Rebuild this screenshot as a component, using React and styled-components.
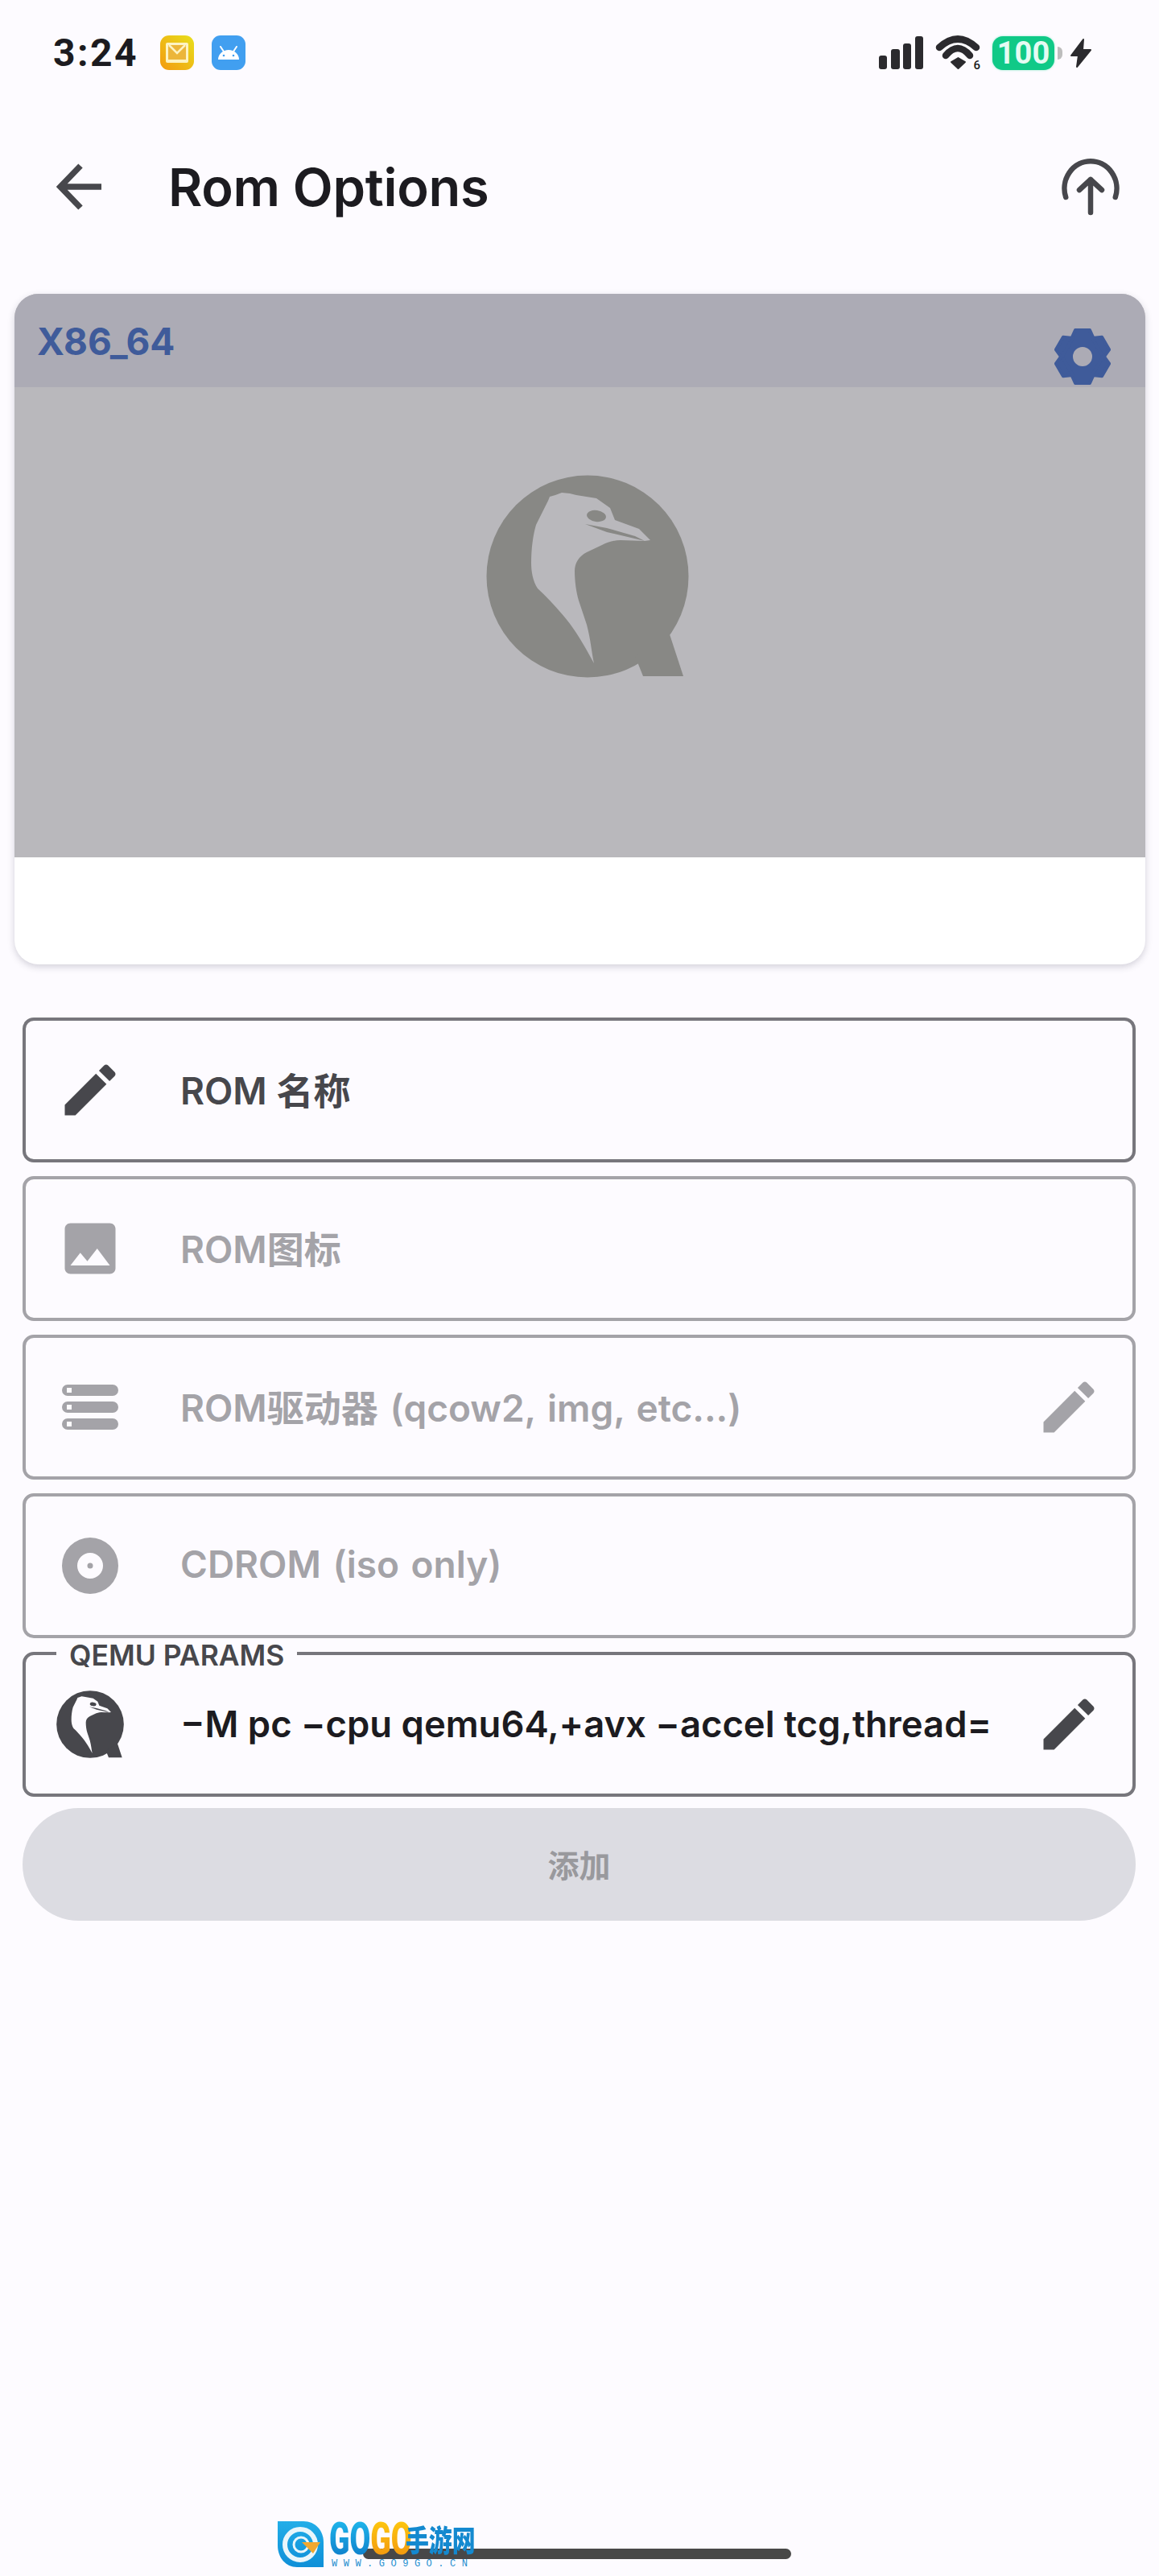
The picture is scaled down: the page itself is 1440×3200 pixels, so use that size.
import React from "react";
import styled, { createGlobalStyle } from "styled-components";

const GlobalStyle = createGlobalStyle`
  html, body {
    margin: 0;
    padding: 0;
    background: #fdfbff;
  }
  * {
    box-sizing: border-box;
  }
`;

const FONT = `Inter, "Noto Sans CJK SC", sans-serif`;

const Page = styled.div`
  position: relative;
  width: 1440px;
  height: 3200px;
  display: flex;
  flex-direction: column;
  background: #fdfbff;
  font-family: ${FONT};
  overflow: hidden;
`;

const StatusBar = styled.div`
  height: 132px;
  padding: 44px 83px 0 66px;
  display: flex;
  align-items: flex-start;
`;

const Clock = styled.span`
  font-family: Roboto, sans-serif;
  font-size: 48px;
  line-height: 44px;
  font-weight: 700;
  letter-spacing: 2.5px;
  color: #1c1b20;
  margin-right: 27px;
`;

const AppBadge = styled.div`
  width: 42px;
  height: 43px;
  border-radius: 11px;
  margin-right: 22px;
  background: ${({ $bg }) => $bg};
  display: flex;
  align-items: center;
  justify-content: center;
`;

const StatusRight = styled.div`
  margin-left: auto;
  display: flex;
  align-items: center;
  height: 43px;
`;

const WifiWrap = styled.div`
  position: relative;
  width: 58px;
  height: 44px;
  margin-left: 14px;
`;

const WifiGeneration = styled.span`
  position: absolute;
  right: 2px;
  bottom: -1px;
  font-family: Roboto, sans-serif;
  font-size: 15px;
  line-height: 15px;
  font-weight: 500;
  color: #1c1b20;
`;

const Battery = styled.div`
  position: relative;
  width: 77px;
  height: 42px;
  margin: 0 19px 0 13px;
  border-radius: 13px;
  background: #10c987;
  box-shadow: 0 0 3px #9cebcf;
  color: #e4fbf3;
  font-family: Roboto, sans-serif;
  font-size: 38px;
  line-height: 42px;
  font-weight: 700;
  text-align: center;

  &::after {
    content: "";
    position: absolute;
    right: -10px;
    top: 13px;
    width: 6px;
    height: 16px;
    border-radius: 0 8px 8px 0;
    background: #bdbdbd;
  }
`;

const TopBar = styled.div`
  height: 200px;
  padding: 0 49px 0 70px;
  display: flex;
  align-items: center;
`;

const Title = styled.h1`
  margin: 0 0 0 83px;
  font-size: 65px;
  font-weight: 600;
  letter-spacing: -0.3px;
  color: #1c1b20;
  flex: 1;
`;

const Card = styled.div`
  position: relative;
  width: 1405px;
  height: 833px;
  margin: 33px 0 0 18px;
  background: #ffffff;
  border-radius: 30px;
  overflow: hidden;
  box-shadow: 0 3px 8px rgba(60, 60, 80, 0.22);
  flex: none;
`;

const Preview = styled.div`
  height: 700px;
  background: #b9b8bc;
  display: flex;
  align-items: center;
  justify-content: center;
  padding: 2px 0 0 18px;
`;

const CardHeader = styled.div`
  position: absolute;
  top: 0;
  left: 0;
  right: 0;
  height: 116px;
  padding: 31px 43px 0 28px;
  background: #acabb5;
  display: flex;
  justify-content: space-between;
  align-items: flex-start;
`;

const Arch = styled.span`
  font-size: 46px;
  line-height: 56px;
  font-weight: 700;
  color: #3f5b9a;
`;

const GearSlot = styled.div`
  margin-top: 11px;
  width: 70px;
  height: 72px;
`;

const Form = styled.div`
  width: 1383px;
  margin: 66px 0 0 28px;
  display: flex;
  flex-direction: column;
  gap: 17px;
`;

const Field = styled.div`
  position: relative;
  height: 180px;
  padding: 0 37px 0 42px;
  display: flex;
  align-items: center;
  border-radius: 14px;
  border: 4px solid ${({ $active }) => ($active ? "#77767c" : "#a4a3a8")};
  color: ${({ $active }) => ($active ? "#47474c" : "#a4a3a8")};
`;

const FieldIcon = styled.div`
  width: 84px;
  height: 84px;
  flex: none;
  margin-right: 70px;
  margin-left: -4px;
`;

const FieldText = styled.div`
  flex: 1;
  min-width: 0;
  padding-bottom: ${({ $strong }) => ($strong ? "1px" : "4px")};
  font-size: ${({ $strong }) => ($strong ? "45.4px" : "46px")};
  font-weight: 600;
  word-spacing: ${({ $wide }) => ($wide ? "3px" : "0")};
  color: ${({ $strong }) => ($strong ? "#1c1b20" : "inherit")};
  white-space: nowrap;
`;

const FieldLabel = styled.span`
  position: absolute;
  top: -16px;
  left: 38px;
  padding: 0 16px;
  background: #fdfbff;
  font-size: 35.5px;
  line-height: 34px;
  font-weight: 600;
  color: #47474c;
  white-space: nowrap;
`;

const AddButton = styled.button`
  height: 140px;
  margin-top: -3px;
  padding: 0 0 3px;
  border: 0;
  border-radius: 70px;
  background: #dcdce2;
  color: #99999d;
  font-family: ${FONT};
  font-size: 39px;
  font-weight: 600;
`;

const HomeBar = styled.div`
  width: 532px;
  height: 13px;
  margin: auto 0 21px 451px;
  border-radius: 7px;
  background: #484848;
  flex: none;
`;

const Watermark = styled.div`
  position: absolute;
  left: 345px;
  top: 3132px;
  display: flex;
  gap: 7px;
`;

const WatermarkBadge = styled.svg`
  flex: none;
`;

const WatermarkText = styled.div`
  width: 190px;
  flex: none;
  display: flex;
  flex-direction: column;
`;

const WatermarkName = styled.div`
  height: 44px;
  display: flex;
  align-items: center;
  white-space: nowrap;
`;

const GoGroup = styled.div`
  width: 95px;
  flex: none;
  display: flex;
  transform: scaleX(0.68);
  transform-origin: left center;
`;

const GoWord = styled.span`
  font-family: Roboto, sans-serif;
  font-size: 55px;
  line-height: 44px;
  font-weight: 900;
  background: ${({ $orange }) =>
    $orange
      ? "linear-gradient(#fdc60f, #f2980f)"
      : "linear-gradient(#1fb4ea, #0f80cc)"};
  -webkit-background-clip: text;
  background-clip: text;
  color: transparent;
`;

const GoCn = styled.span`
  flex: none;
  font-family: "Noto Sans CJK SC", sans-serif;
  font-size: 37px;
  line-height: 44px;
  font-weight: 900;
  color: #1489cf;
  transform: scaleX(0.78);
  transform-origin: left center;
`;

const WatermarkUrl = styled.div`
  font-family: "Liberation Mono", monospace;
  font-size: 12px;
  line-height: 12px;
  letter-spacing: 7.5px;
  color: #1f8fd0;
  margin: 3px 0 0 3px;
  white-space: nowrap;
`;

const PENCIL =
  "M3 17.25V21h3.75L17.81 9.94l-3.75-3.75L3 17.25zM20.71 7.04c.39-.39.39-1.02 0-1.41l-2.34-2.34c-.39-.39-1.02-.39-1.41 0l-1.83 1.83 3.75 3.75 1.83-1.83z";

const MaterialIcon = ({ d, size = 84 }) => (
  <svg width={size} height={size} viewBox="0 0 24 24" fill="currentColor">
    <path d={d} />
  </svg>
);

const PencilIcon = () => <MaterialIcon d={PENCIL} />;

const ImageIcon = () => (
  <MaterialIcon d="M21 19V5c0-1.1-.9-2-2-2H5c-1.1 0-2 .9-2 2v14c0 1.1.9 2 2 2h14c1.1 0 2-.9 2-2zM8.5 13.5l2.5 3.01L14.5 12l4.5 6H5l3.5-4.5z" />
);

const DriveIcon = () => (
  <svg width="84" height="84" viewBox="0 0 84 84" fill="currentColor">
    <path
      fillRule="evenodd"
      d="M14 14h56a7 7 0 0 1 0 14H14a7 7 0 0 1 0-14zM13 18v6h6v-6zM14 35h56a7 7 0 0 1 0 14H14a7 7 0 0 1 0-14zM13 39v6h6v-6zM14 56h56a7 7 0 0 1 0 14H14a7 7 0 0 1 0-14zM13 60v6h6v-6z"
    />
  </svg>
);

const DiscIcon = () => (
  <svg width="84" height="84" viewBox="0 0 84 84" fill="currentColor">
    <path
      fillRule="evenodd"
      d="M42 7a35 35 0 1 0 0 70a35 35 0 1 0 0-70zM42 26a16 16 0 1 1 0 32a16 16 0 1 1 0-32z"
    />
    <circle cx="42" cy="42" r="3.5" />
  </svg>
);

// head and neck of the QEMU bird cut out of the round Q
const QemuLogo = ({ size, color, cut }) => (
  <svg width={size} height={size} viewBox="0 0 252 252">
    <circle cx="126" cy="126" r="125.5" fill={color} />
    <path d="M227 195L245 250H195L185 225Z" fill={color} />
    <path
      fill={cut}
      d="M77 32L79 27L86 25L94 22L104 23L112 25L137 29L154 41L160 56L190 67L204 81L197 82L167 81C158 81 150 84 144 87L125 96C115 101 110 110 110 119C110 132 112 146 115 156L125 186C130 205 131 220 134 234L124 216C115 200 107 188 97 176C86 163 75 151 64 141C58 132 56 120 56 109C56 92 58 76 62 62Z"
    />
    <ellipse cx="137" cy="51" rx="12" ry="7" transform="rotate(8 137 51)" fill={color} />
    <path d="M123 61L150 66L185 76L197 82L150 71Z" fill={color} />
  </svg>
);

const GEAR_TEETH = [0, 60, 120, 180, 240, 300];

const GearIcon = () => (
  <svg width="70" height="72" viewBox="-35 -36 70 72">
    <path
      fillRule="evenodd"
      fill="#3f5b9a"
      d="M0 -27a27 27 0 1 0 0 54a27 27 0 1 0 0-54zM0 -12a12 12 0 1 1 0 24a12 12 0 1 1 0-24z"
    />
    {GEAR_TEETH.map((angle) => (
      <path
        key={angle}
        d="M-14 -22L-9 -33H9L14 -22Z"
        fill="#3f5b9a"
        stroke="#3f5b9a"
        strokeWidth="4"
        strokeLinejoin="round"
        transform={`rotate(${angle})`}
      />
    ))}
  </svg>
);

const BackArrow = () => (
  <svg width="56" height="58" viewBox="0 0 56 58" fill="none" stroke="#47474c" strokeWidth="7.500">
    <path d="M56 29H5M30 3L5 29l25 26" />
  </svg>
);

const UploadIcon = () => (
  <svg width="72" height="72" viewBox="0 0 72 72" fill="none" stroke="#47474c" strokeWidth="6.500" strokeLinecap="round" strokeLinejoin="round">
    <path d="M5.200 49A32.500 34 0 1 1 66.800 49" />
    <path d="M36 68V27M22 40l14-13 14 13" />
  </svg>
);

const MailIcon = () => (
  <svg width="30" height="27" viewBox="0 0 30 27">
    <rect x="1" y="1" width="28" height="25" rx="2" fill="#fdf3c2" />
    <rect x="4" y="4" width="22" height="18" fill="#ecb63a" />
    <path d="M5 4l10 10L25 4" fill="none" stroke="#fdf3c2" strokeWidth="2.500" />
  </svg>
);

const AndroidIcon = () => (
  <svg width="28" height="18" viewBox="0 0 28 18" fill="#ffffff">
    <path d="M1 17C1 10 7 5 14 5s13 5 13 12H1z" />
    <path d="M4 1l4 6M24 1l-4 6" stroke="#ffffff" strokeWidth="2" strokeLinecap="round" />
    <circle cx="8" cy="12" r="1.300" fill="#419ff0" />
    <circle cx="20" cy="12" r="1.300" fill="#419ff0" />
  </svg>
);

const SignalIcon = () => (
  <svg width="56" height="41" viewBox="0 0 56 41" fill="#2b2a2e">
    <rect x="0" y="24" width="10" height="17" rx="3" />
    <rect x="15" y="16" width="11" height="25" rx="3" />
    <rect x="30" y="9" width="10" height="32" rx="3" />
    <rect x="45" y="0" width="10" height="41" rx="3" />
  </svg>
);

const WifiIcon = () => (
  <WifiWrap>
    <svg width="58" height="44" viewBox="0 0 58 44">
      <g fill="none" stroke="#2b2a2e" strokeWidth="8.500" strokeLinecap="round">
        <path d="M5 15Q28 -6 51 15" />
        <path d="M13 25Q28 7 43 25" />
      </g>
      <path d="M20 33L28.500 28L37 33L28.500 41Z" fill="#2b2a2e" stroke="#2b2a2e" strokeWidth="2" strokeLinejoin="round" />
    </svg>
    <WifiGeneration>6</WifiGeneration>
  </WifiWrap>
);

const BoltIcon = () => (
  <svg width="28" height="38" viewBox="0 0 28 38" fill="#2b2a2e" stroke="#2b2a2e" strokeWidth="2" strokeLinejoin="round">
    <path d="M17 2L2 22H11L9 36L26 15H16Z" />
  </svg>
);

const WatermarkLogo = () => (
  <WatermarkBadge width="57" height="57" viewBox="0 0 57 57">
    <defs>
      <linearGradient id="wm" x1="0" y1="0" x2="0" y2="1">
        <stop offset="0" stopColor="#22aee8" />
        <stop offset="1" stopColor="#0f8fd8" />
      </linearGradient>
    </defs>
    <path d="M0 0H32C47 0 57 12 57 26V57H24C10 57 0 45 0 30Z" fill="url(#wm)" />
    <circle cx="28" cy="29" r="19" fill="none" stroke="#e9f6fb" strokeWidth="6" />
    <circle cx="29" cy="29" r="9" fill="none" stroke="#e9f6fb" strokeWidth="3" />
    <path d="M30 26H53L44 40Z" fill="#f0a830" />
  </WatermarkBadge>
);

const App = () => {
  return (
    <Page>
      <GlobalStyle />
      <StatusBar>
        <Clock>3:24</Clock>
        <AppBadge $bg="linear-gradient(45deg, #f39a10, #e8e01c)">
          <MailIcon />
        </AppBadge>
        <AppBadge $bg="#419ff0">
          <AndroidIcon />
        </AppBadge>
        <StatusRight>
          <SignalIcon />
          <WifiIcon />
          <Battery>100</Battery>
          <BoltIcon />
        </StatusRight>
      </StatusBar>

      <TopBar>
        <BackArrow />
        <Title>Rom Options</Title>
        <UploadIcon />
      </TopBar>

      <Card>
        <Preview>
          <QemuLogo size={252} color="#888885" cut="#b9b8bc" />
        </Preview>
        <CardHeader>
          <Arch>X86_64</Arch>
          <GearSlot>
            <GearIcon />
          </GearSlot>
        </CardHeader>
      </Card>

      <Form>
        <Field $active>
          <FieldIcon>
            <PencilIcon />
          </FieldIcon>
          <FieldText>ROM 名称</FieldText>
        </Field>
        <Field>
          <FieldIcon>
            <ImageIcon />
          </FieldIcon>
          <FieldText>ROM图标</FieldText>
        </Field>
        <Field>
          <FieldIcon>
            <DriveIcon />
          </FieldIcon>
          <FieldText $wide>ROM驱动器 (qcow2, img, etc...)</FieldText>
          <PencilIcon />
        </Field>
        <Field>
          <FieldIcon>
            <DiscIcon />
          </FieldIcon>
          <FieldText $wide>CDROM (iso only)</FieldText>
        </Field>
        <Field $active>
          <FieldLabel>QEMU PARAMS</FieldLabel>
          <FieldIcon>
            <QemuLogo size={84} color="#47474c" cut="#fdfbff" />
          </FieldIcon>
          <FieldText $strong>−M pc −cpu qemu64,+avx −accel tcg,thread=</FieldText>
          <PencilIcon />
        </Field>
        <AddButton>添加</AddButton>
      </Form>

      <HomeBar />
      <Watermark>
        <WatermarkLogo />
        <WatermarkText>
          <WatermarkName>
            <GoGroup>
              <GoWord>GO</GoWord>
              <GoWord $orange>GO</GoWord>
            </GoGroup>
            <GoCn>手游网</GoCn>
          </WatermarkName>
          <WatermarkUrl>WWW.GO9GO.CN</WatermarkUrl>
        </WatermarkText>
      </Watermark>
    </Page>
  );
};

export default App;
